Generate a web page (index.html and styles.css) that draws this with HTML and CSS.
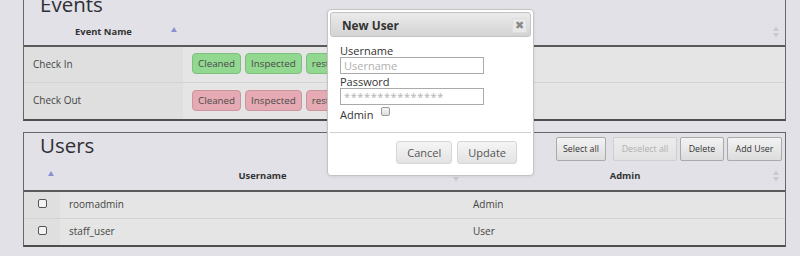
FILE: index.html
```html
<!DOCTYPE html>
<html lang="en">
<head>
  <meta charset="UTF-8" />
  <title>Rooms admin</title>
  <link rel="stylesheet" href="styles.css">
</head>
<body>
  <div class="page">
    <div class="panel panel-events">
      <div class="panel-head">
        <h2>Events</h2>
      </div>
      <table class="grid">
        <colgroup><col style="width: 159px"><col></colgroup>
        <thead>
          <tr>
            <th><div class="th-inner"><span class="th-label">Event Name</span><span class="sort asc"></span></div></th>
            <th><div class="th-inner"><span class="th-label"></span><span class="sort both"></span></div></th>
          </tr>
        </thead>
        <tbody>
          <tr>
            <td class="sorted">Check In</td>
            <td class="tags">
              <span class="tag ok">Cleaned</span><span class="tag ok">Inspected</span><span class="tag ok">restocked</span>
            </td>
          </tr>
          <tr>
            <td class="sorted">Check Out</td>
            <td class="tags">
              <span class="tag bad">Cleaned</span><span class="tag bad">Inspected</span><span class="tag bad">restocked</span>
            </td>
          </tr>
        </tbody>
      </table>
    </div>

    <div class="panel panel-users">
      <div class="panel-head">
        <h2>Users</h2>
        <div class="toolbar">
          <button class="btn btn-select">Select all</button>
          <button class="btn btn-deselect" disabled>Deselect all</button>
          <button class="btn btn-delete">Delete</button>
          <button class="btn btn-add">Add User</button>
        </div>
      </div>
      <table class="grid grid-users">
        <colgroup><col style="width: 36px"><col style="width: 405px"><col></colgroup>
        <thead>
          <tr>
            <th class="th-check"><div class="th-inner"><span class="th-label"></span><span class="sort asc"></span></div></th>
            <th><div class="th-inner"><span class="th-label">Username</span><span class="sort both"></span></div></th>
            <th><div class="th-inner"><span class="th-label">Admin</span><span class="sort both"></span></div></th>
          </tr>
        </thead>
        <tbody>
          <tr>
            <td class="sorted check"><input type="checkbox" class="box"></td>
            <td>roomadmin</td>
            <td>Admin</td>
          </tr>
          <tr>
            <td class="sorted check"><input type="checkbox" class="box"></td>
            <td>staff_user</td>
            <td>User</td>
          </tr>
        </tbody>
      </table>
    </div>
  </div>

  <div class="dialog">
    <div class="dialog-head">
      <span>New User</span>
      <button class="close">&#x2716;</button>
    </div>
    <div class="dialog-body">
      <label for="username">Username</label>
      <input type="text" id="username" placeholder="Username">
      <label for="password">Password</label>
      <input type="password" id="password" placeholder="***************">
      <label class="admin-row">Admin <input type="checkbox" class="admin-box"></label>
    </div>
    <div class="dialog-foot">
      <button class="dbtn">Cancel</button>
      <button class="dbtn">Update</button>
    </div>
  </div>
</body>
</html>
```

FILE: styles.css
```css
* {
  box-sizing: border-box;
  margin: 0;
  padding: 0;
}

body {
  font-family: 'Open Sans', sans-serif;
  background-color: #e2e1e7;
  color: #444;
  height: 256px;
  overflow: hidden;
}

.page {
  width: 763px;
  margin-left: 23px;
  margin-top: -7px;
}

.panel {
  border: 1px solid #666;
  border-bottom: 2px solid #4e4e4e;
}

.panel-users {
  margin-top: 11px;
}

.panel-head {
  display: flex;
  justify-content: space-between;
  align-items: flex-start;
  padding-left: 16px;
}

.panel-head h2 {
  font-size: 20.5px;
  font-weight: 400;
  line-height: 24px;
  color: #2f2f33;
}

.panel-events .panel-head h2 {
  margin-top: -2px;
  margin-bottom: 2px;
}

.panel-users .panel-head {
  height: 30px;
}

.toolbar {
  display: flex;
  gap: 3px;
  margin-top: 4px;
  padding-right: 3px;
}

.btn {
  height: 24px;
  padding: 0;
  font-family: 'Open Sans', sans-serif;
  font-size: 8.8px;
  color: #333;
  background: linear-gradient(#f3f3f3, #dcdcdc);
  border: 1px solid #a9a9a9;
  border-radius: 2px;
}

.btn-select {
  width: 50px;
  margin-right: 4px;
}

.btn-deselect {
  width: 64px;
}

.btn-delete {
  width: 44px;
}

.btn-add {
  width: 55px;
}

.btn:disabled {
  color: #b0b0b0;
  background: linear-gradient(#ececec, #e2e2e2);
  border-color: #cfcfcf;
}

/* tablas */
.grid {
  width: 100%;
  border-collapse: collapse;
  table-layout: fixed;
}

.grid th {
  height: 28px;
  padding: 0 5px 0 12px;
  border-bottom: 2px solid #5a5a5a;
  font-size: 9.4px;
  font-weight: 700;
  color: #333;
}

.grid-users th {
  padding-bottom: 2px;
}

.th-inner {
  display: flex;
  align-items: center;
}

.th-label {
  flex: 1;
  text-align: center;
}

.sort {
  width: 7px;
  height: 12px;
  position: relative;
}

.sort.asc::before {
  content: '';
  position: absolute;
  left: 0;
  top: 1px;
  border-left: 3px solid transparent;
  border-right: 3px solid transparent;
  border-bottom: 5px solid #8d8dd2;
}

.sort.both::before,
.sort.both::after {
  content: '';
  position: absolute;
  left: 0;
  border-left: 3.5px solid transparent;
  border-right: 3.5px solid transparent;
}

.sort.both::before {
  top: 0;
  border-bottom: 5px solid #cacad0;
}

.sort.both::after {
  bottom: 0;
  border-top: 5px solid #cacad0;
}

.grid td {
  height: 36px;
  padding: 0 9px 1px;
  font-size: 10px;
  background-color: #e5e5e5;
  border-bottom: 1px solid #d3d3d3;
  white-space: nowrap;
  overflow: hidden;
}

.grid tbody tr:last-child td {
  border-bottom: none;
}

.panel-events .grid tbody tr:last-child td {
  height: 37px;
}

.grid td.sorted {
  background-color: #dfdfdf;
}

.grid-users td {
  height: 27px;
  padding-bottom: 2px;
}

.grid-users td:nth-child(3) {
  padding-left: 8px;
}

.grid td.check {
  padding: 0;
  text-align: center;
}

.box {
  appearance: none;
  display: block;
  margin: 0 auto 3px;
  width: 9px;
  height: 9px;
  border: 1px solid #555;
  border-radius: 2px;
  background-color: #f3f3f3;
}

.tags {
  padding-left: 9px;
}

.tag {
  display: inline-block;
  height: 21px;
  line-height: 19px;
  padding: 0 5px;
  margin-right: 4px;
  font-size: 9.8px;
  color: #4a4a4a;
  border-radius: 4px;
}

.tag.ok {
  background-color: #92d891;
  border: 1px solid #7dbf7c;
}

.tag.bad {
  background-color: #e5aab3;
  border: 1px solid #cc949c;
}

/* dialogo */
.dialog {
  position: absolute;
  left: 327px;
  top: 9px;
  width: 207px;
  height: 167px;
  padding: 2px;
  background-color: #ffffff;
  border: 1px solid #c4c4c4;
  border-radius: 4px;
  box-shadow: 0 1px 3px rgba(0, 0, 0, 0.08);
}

.dialog-head {
  display: flex;
  justify-content: space-between;
  align-items: center;
  height: 25px;
  padding: 0 3px 0 11px;
  background: linear-gradient(#ebebeb, #d3d3d3);
  border: 1px solid #c3c3c3;
  border-radius: 3px;
}

.dialog-head span {
  font-size: 11.8px;
  font-weight: 700;
  color: #333;
}

.close {
  width: 15px;
  height: 15px;
  margin-top: 1px;
  font-size: 10.5px;
  line-height: 13px;
  color: #8a8a8a;
  background-color: #e9e9e9;
  border: 1px solid #dedede;
  border-radius: 2px;
}

.dialog-body {
  padding: 8px 10px 0;
  height: 96px;
  border-bottom: 1px solid #cfcfcf;
}

.dialog-body label {
  display: block;
  font-size: 11px;
  line-height: 12px;
  color: #333;
}

.dialog-body input[type="text"],
.dialog-body input[type="password"] {
  display: block;
  width: 144px;
  height: 17px;
  margin-bottom: 2px;
  padding: 0 3px;
  font-family: 'Open Sans', sans-serif;
  font-size: 11px;
  border: 1px solid #aaa;
  background-color: #fff;
}

.dialog-body input::placeholder {
  color: #b0b0b0;
}

#password::placeholder {
  letter-spacing: 0.6px;
}

.dialog-body .admin-row {
  display: flex;
  align-items: center;
  line-height: 15px;
}

.admin-box {
  appearance: none;
  width: 9px;
  height: 9px;
  margin-left: 8px;
  margin-top: -6px;
  border: 1px solid #9a9a9a;
  border-radius: 2px;
  background: linear-gradient(#f6f6f6, #dedede);
}

.dialog-foot {
  display: flex;
  justify-content: flex-end;
  gap: 5px;
  padding: 8px 14px 0 0;
}

.dbtn {
  height: 23px;
  padding: 0 10px;
  font-family: 'Open Sans', sans-serif;
  font-size: 11px;
  color: #555;
  background: linear-gradient(#f5f5f5, #e3e3e3);
  border: 1px solid #d6d6d6;
  border-radius: 3px;
}
```
